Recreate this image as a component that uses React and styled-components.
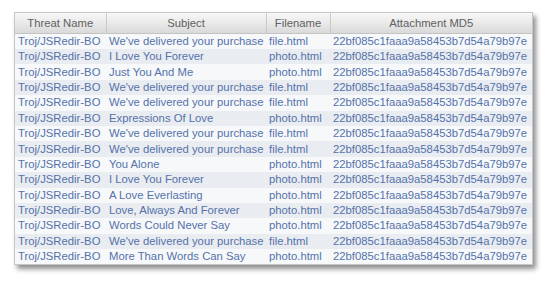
import React from "react";
import styled, { createGlobalStyle } from "styled-components";

const GlobalStyle = createGlobalStyle`
  html, body {
    margin: 0;
    padding: 0;
    background: #ffffff;
  }
`;

const Page = styled.div`
  padding: 12px 0 0 14px;
  width: 548px;
  height: 282px;
  box-sizing: border-box;
`;

const Panel = styled.div`
  width: 519px;
  background: #f4f6f9;
  border: 1px solid #c4c7cc;
  box-sizing: border-box;
  box-shadow: 3px 4px 5px rgba(0, 0, 0, 0.45);
`;

const Table = styled.table`
  width: 100%;
  border-collapse: collapse;
  table-layout: fixed;
  font-family: "Liberation Sans", Arial, sans-serif;
  font-size: 11.3px;
`;

const Th = styled.th`
  height: 20px;
  padding: 0;
  font-weight: normal;
  color: #616161;
  text-align: center;
  background: linear-gradient(to bottom, #f7f7f7 0%, #e9e9e9 50%, #d9d9d9 100%);
  border-left: 1px solid #c9c9c9;
  border-bottom: 1px solid #c4c4c4;
  &:first-child {
    border-left: none;
  }
`;

const Row = styled.tr`
  height: 15.4px;
  background: ${(p) => (p.$alt ? "#e9ecf0" : "#f6f8fa")};
`;

const Td = styled.td`
  padding: 0 0 0 3px;
  color: #5572ab;
  white-space: nowrap;
  overflow: hidden;
  line-height: 15px;
`;

const md5 = "22bf085c1faaa9a58453b7d54a79b97e";

const rows = [
  ["We've delivered your purchase", "file.html"],
  ["I Love You Forever", "photo.html"],
  ["Just You And Me", "photo.html"],
  ["We've delivered your purchase", "file.html"],
  ["We've delivered your purchase", "file.html"],
  ["Expressions Of Love", "photo.html"],
  ["We've delivered your purchase", "file.html"],
  ["We've delivered your purchase", "file.html"],
  ["You Alone", "photo.html"],
  ["I Love You Forever", "photo.html"],
  ["A Love Everlasting", "photo.html"],
  ["Love, Always And Forever", "photo.html"],
  ["Words Could Never Say", "photo.html"],
  ["We've delivered your purchase", "file.html"],
  ["More Than Words Can Say", "photo.html"],
];

export default function App() {
  return (
    <>
      <GlobalStyle />
      <Page>
        <Panel>
          <Table>
            <colgroup>
              <col style={{ width: 91 }} />
              <col style={{ width: 160 }} />
              <col style={{ width: 64 }} />
              <col />
            </colgroup>
            <thead>
              <tr>
                <Th>Threat Name</Th>
                <Th>Subject</Th>
                <Th>Filename</Th>
                <Th>Attachment MD5</Th>
              </tr>
            </thead>
            <tbody>
              {rows.map(([subject, file], i) => (
                <Row key={i} $alt={i % 2 === 1}>
                  <Td>Troj/JSRedir-BO</Td>
                  <Td>{subject}</Td>
                  <Td>{file}</Td>
                  <Td>{md5}</Td>
                </Row>
              ))}
            </tbody>
          </Table>
        </Panel>
      </Page>
    </>
  );
}
